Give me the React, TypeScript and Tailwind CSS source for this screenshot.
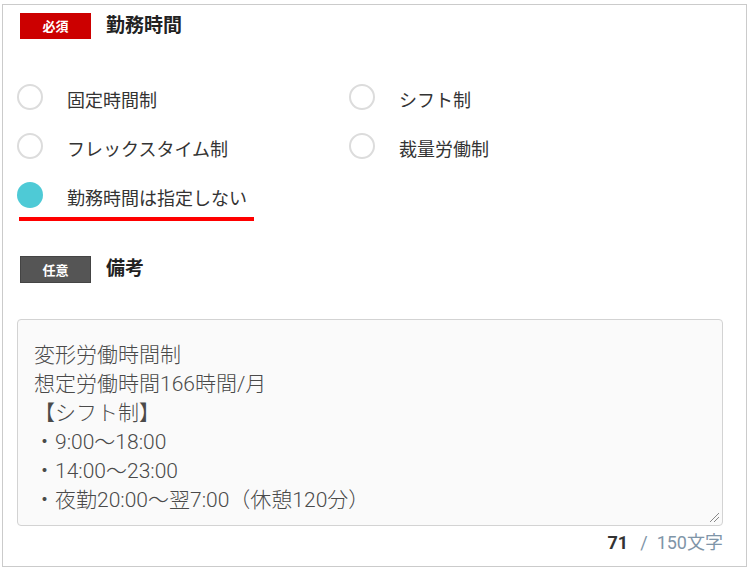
import React from "react";

const jp = "font-['Noto_Sans_CJK_JP',sans-serif]";

function Badge({ label, color }: { label: string; color: string }) {
  return (
    <div
      className={`w-[71px] h-[26px] flex items-center justify-center text-white text-[13px] font-bold ${color}`}
    >
      {label}
    </div>
  );
}

function Radio({ label, checked }: { label: string; checked?: boolean }) {
  return (
    <div className="flex items-center h-[26px]">
      {checked ? (
        <span className="w-[26px] h-[26px] rounded-full bg-[#4ecad6] shrink-0" />
      ) : (
        <span className="w-[26px] h-[26px] rounded-full border-2 border-[#dcdcdc] bg-white shrink-0" />
      )}
      <span className="ml-[24px] text-[18px] leading-[26px] text-[#333333] mt-[3px]">{label}</span>
    </div>
  );
}

export default function App() {
  const note = [
    "変形労働時間制",
    "想定労働時間166時間/月",
    "【シフト制】",
    "・9:00～18:00",
    "・14:00～23:00",
    "・夜勤20:00～翌7:00（休憩120分）",
  ];
  return (
    <div className={`pl-[2px] pt-[4px] bg-white ${jp}`}>
      <div className="w-[745px] h-[563px] border border-[#cbcbcb] bg-white px-[14px]">
        <div className="mt-[8px] ml-[3px] flex items-start">
          <Badge label="必須" color="bg-[#cc0000]" />
          <div className="ml-[15px] text-[19px] leading-[21px] font-bold text-[#222222]">勤務時間</div>
        </div>

        <div className="mt-[45px] grid grid-cols-[332px_1fr] gap-y-[23px]">
          <Radio label="固定時間制" />
          <Radio label="シフト制" />
          <Radio label="フレックスタイム制" />
          <Radio label="裁量労働制" />
          <Radio label="勤務時間は指定しない" checked />
        </div>
        <div className="ml-[2px] mt-[9px] w-[235px] h-[4px] bg-[#ff0000]" />

        <div className="mt-[35px] ml-[3px] flex items-start">
          <div className="w-[71px] h-[27px] flex items-center justify-center text-white text-[13px] font-bold bg-[#555555] border border-[#444444]">
            任意
          </div>
          <div className="ml-[15px] text-[19px] leading-[21px] font-bold text-[#222222]">備考</div>
        </div>

        <div className="relative mt-[36px] w-[706px] h-[207px] border border-[#d3d3d3] rounded-[4px] bg-[#fafafa] pl-[16px] pt-[21px]">
          <div className="font-['Roboto','Noto_Sans_CJK_JP',sans-serif] font-light text-[21px] leading-[29px] text-[#4a4a4a]">
            {note.map((l) => (
              <div key={l}>{l}</div>
            ))}
          </div>
          <svg
            className="absolute right-[2px] bottom-[2px]"
            width="12"
            height="12"
            viewBox="0 0 12 12"
          >
            <line x1="11" y1="2" x2="2" y2="11" stroke="#888888" strokeWidth="1" />
            <line x1="11" y1="6" x2="6" y2="11" stroke="#888888" strokeWidth="1" />
          </svg>
        </div>

        <div className="mt-[5px] w-[706px] h-[24px] leading-[24px] flex justify-end items-center text-[18px] font-['Roboto','Noto_Sans_CJK_JP',sans-serif]">
          <span className="font-bold text-[#333333]">71</span>
          <span className="ml-[12px] mr-[9px] text-[#7f95a8]">/</span>
          <span className="text-[#7f95a8]">150文字</span>
        </div>
      </div>
    </div>
  );
}
